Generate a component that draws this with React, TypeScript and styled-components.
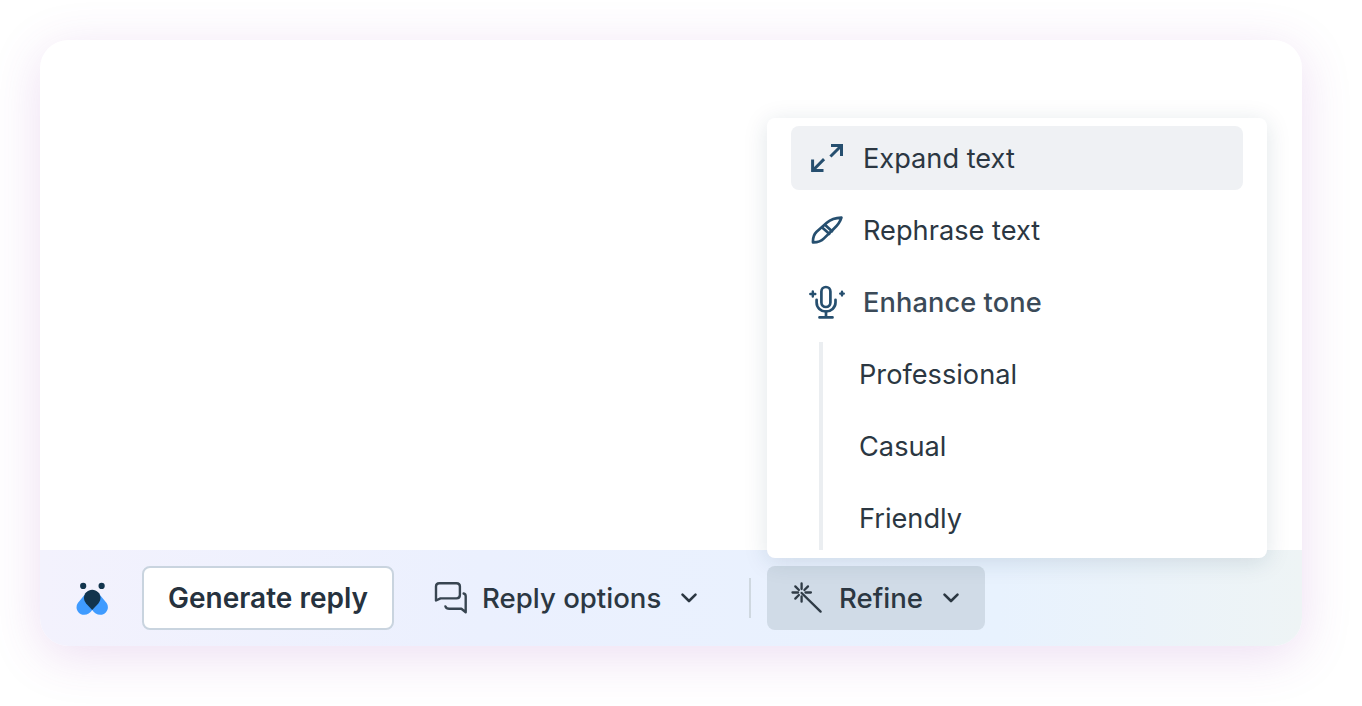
import React from "react";
import styled, { createGlobalStyle } from "styled-components";

const GlobalStyle = createGlobalStyle`
  html, body {
    margin: 0;
    background: #fff;
    overflow: hidden;
  }
  * {
    box-sizing: border-box;
  }
  svg {
    flex-shrink: 0;
  }
`;

const LogoIcon = () => (
  <svg width="33" height="35" viewBox="0 0 34 36" fill="none">
    <circle cx="7.4" cy="4" r="3.2" fill="#12344d" />
    <circle cx="26.4" cy="4" r="3.2" fill="#12344d" />
    <path
      d="M11 10.5 1.9 21.6C-1.6 26.5 2 33.7 8.4 33.7c3.4 0 6.3-1.8 8.3-5 2 3.2 4.9 5 8.3 5 6.4 0 10-7.2 6.5-12.1L22.4 10.5Z"
      fill="#3f9bff"
    />
    <path
      d="M16.7 28.7 10.4 22c-1.4-1.6-2.2-3.6-2.2-5.7 0-4.5 3.8-8.3 8.5-8.3s8.5 3.8 8.5 8.3c0 2.1-.8 4.1-2.2 5.7Z"
      fill="#12344d"
    />
  </svg>
);

const ReplyIcon = () => (
  <svg width="34" height="34" viewBox="0 0 34 34" fill="none" stroke="#384551" strokeWidth="2.4" strokeLinecap="round" strokeLinejoin="round">
    <path d="M2 19.5V5.5C2 3.6 3.4 2.2 5.3 2.2h17.2c2 0 3.4 1.4 3.4 3.3v8.6c0 1.9-1.4 3.3-3.4 3.3H6.5L2 19.5Z" />
    <path d="M29.6 12.5c1.3.3 2.1 1.3 2.1 2.7v16l-4.3-3.4H15.3c-1.9 0-3.3-.8-3.9-2.4" />
  </svg>
);

const Chevron = () => (
  <svg width="18" height="12" viewBox="0 0 18 12" fill="none" stroke="#2b3742" strokeWidth="2.6" strokeLinecap="round" strokeLinejoin="round">
    <path d="M2.5 2.6 9 9l6.5-6.4" />
  </svg>
);

const WandIcon = () => (
  <svg width="32" height="32" viewBox="0 0 32 32" fill="none" stroke="#2f3b46" strokeWidth="2.3" strokeLinecap="round">
    <path d="M10.6 11 29.6 29.6" strokeWidth="2.4" />
    <path d="M10.6 1.5v5.6M1.5 10.5h5.6M14.5 10.5h5.4M4.3 4.4l3.6 3.6M17 4.4l-3.6 3.6M4.3 16.6l3.6-3.6M10.6 14.5v5.2" />
  </svg>
);

const ExpandIcon = () => (
  <svg width="34" height="30" viewBox="0 0 34 30" fill="none" stroke="#264f6f" strokeWidth="3" strokeLinecap="square">
    <path d="M21.5 12.5 31 3M22.5 2.6h9v9" />
    <path d="M13 17.2 3 27.2M2.6 18v9.4H12" />
  </svg>
);

const BrushIcon = () => (
  <svg width="32" height="28" viewBox="0 0 32 28" fill="none" stroke="#264f6f" strokeWidth="2.7" strokeLinecap="round" strokeLinejoin="round">
    <path d="M30.4 1.6c-5.6.2-10.5 1.6-14.6 5.2L5.6 15.8C2.9 18.4 1.8 22.6 2 26.4c4 .1 8.3-1.2 11-4L22.6 13c3.8-3.5 6.5-6.8 7.8-11.4Z" />
    <path d="M11.2 11.6 18.2 17.8M14.2 9 21 15.2" />
  </svg>
);

const MicIcon = () => (
  <svg width="36" height="34" viewBox="0 0 36 34" fill="none" stroke="#264f6f" strokeWidth="2.7" strokeLinecap="round">
    <rect x="12.4" y="2" width="9" height="20" rx="4.5" />
    <path d="M7.6 14.8v2.7c0 5.2 4.2 9 9.3 9s9.6-3.8 9.6-9v-2.7" />
    <path d="M17 26.5v5.4M10.5 32.4h13" />
    <path d="M3.8 6.5v5M1.3 9h5M33 6.8v3.6M31.2 8.6h3.6" strokeWidth="2.4" />
  </svg>
);

const items = [
  { label: "Expand text", icon: <ExpandIcon />, active: true },
  { label: "Rephrase text", icon: <BrushIcon /> },
  { label: "Enhance tone", icon: <MicIcon />, soft: true },
];

const tones = ["Professional", "Casual", "Friendly"];

function App() {
  return (
    <Page>
      <GlobalStyle />
      <Card>
        <Editor />
        <Toolbar>
          <LogoSlot>
            <LogoIcon />
          </LogoSlot>
          <GenerateButton>Generate reply</GenerateButton>
          <ToolButton $width={340}>
            <ReplyIcon />
            <ToolLabel $gap={14}>Reply options</ToolLabel>
            <ChevronSlot>
              <Chevron />
            </ChevronSlot>
          </ToolButton>
          <Divider />
          <ToolButton $width={218} $active>
            <WandIcon />
            <ToolLabel $gap={16}>Refine</ToolLabel>
            <ChevronSlot>
              <Chevron />
            </ChevronSlot>
          </ToolButton>
        </Toolbar>
        <Menu>
          {items.map((item) => (
            <MenuItem key={item.label} $active={item.active}>
              <MenuIcon>{item.icon}</MenuIcon>
              <MenuLabel $soft={item.soft}>{item.label}</MenuLabel>
            </MenuItem>
          ))}
          <SubMenu>
            {tones.map((tone) => (
              <SubItem key={tone}>{tone}</SubItem>
            ))}
          </SubMenu>
        </Menu>
      </Card>
    </Page>
  );
}

const Page = styled.div`
  width: 1362px;
  height: 706px;
  padding: 40px 60px 60px 40px;
  font-family: Inter, "Liberation Sans", sans-serif;
`;

const Card = styled.div`
  position: relative;
  width: 1262px;
  height: 606px;
  display: flex;
  flex-direction: column;
  border-radius: 28px;
  background: #fff;
  box-shadow: 0 10px 50px rgba(150, 60, 180, 0.17);
`;

const Editor = styled.div`
  flex: 1;
  border-radius: 28px 28px 0 0;
`;

const Toolbar = styled.div`
  height: 96px;
  display: flex;
  align-items: center;
  padding-left: 36px;
  border-radius: 0 0 28px 28px;
  background: linear-gradient(90deg, #f3f2fd 0%, #ebf0fe 35%, #e8f2fe 76%, #eef4f5 100%);
`;

const LogoSlot = styled.div`
  width: 66px;
  display: flex;
  padding-top: 2px;
`;

const GenerateButton = styled.button`
  width: 252px;
  height: 64px;
  padding: 0;
  border: 2px solid #c9d4df;
  border-radius: 8px;
  background: #fff;
  color: #26323e;
  font-family: inherit;
  font-size: 28px;
  font-weight: 600;
`;

const ToolButton = styled.div<{ $width: number; $active?: boolean }>`
  width: ${(p) => p.$width}px;
  height: 64px;
  display: flex;
  align-items: center;
  padding-left: ${(p) => (p.$active ? 24 : 40)}px;
  border-radius: 8px;
  background: ${(p) => (p.$active ? "#d0dbe7" : "transparent")};
`;

const ToolLabel = styled.span<{ $gap: number }>`
  margin-left: ${(p) => p.$gap}px;
  color: #2b3742;
  font-size: 27.6px;
  font-weight: 500;
  white-space: nowrap;
`;

const ChevronSlot = styled.span`
  display: flex;
  margin-left: 19px;
`;

const Divider = styled.div`
  width: 2px;
  height: 40px;
  margin: 0 16px 0 15px;
  background: #cfd8e0;
`;

const Menu = styled.div`
  position: absolute;
  top: 78px;
  left: 727px;
  width: 500px;
  height: 440px;
  display: flex;
  flex-direction: column;
  gap: 8px;
  padding: 8px 24px;
  border-radius: 8px;
  background: #fff;
  box-shadow: 0 4px 24px rgba(18, 52, 77, 0.13);
`;

const MenuItem = styled.div<{ $active?: boolean }>`
  height: 64px;
  display: flex;
  align-items: center;
  border-radius: 8px;
  background: ${(p) => (p.$active ? "#eff1f4" : "transparent")};
`;

const MenuIcon = styled.span`
  width: 72px;
  display: flex;
  justify-content: center;
`;

const MenuLabel = styled.span<{ $soft?: boolean }>`
  color: ${(p) => (p.$soft ? "#3b4a58" : "#2b3742")};
  font-size: 27.2px;
  font-weight: ${(p) => (p.$soft ? 500 : 400)};
  letter-spacing: ${(p) => (p.$soft ? "0.1px" : "0")};
  white-space: nowrap;
`;

const SubMenu = styled.div`
  display: flex;
  flex-direction: column;
  gap: 8px;
  margin-left: 28px;
  border-left: 4px solid #ebeef1;
`;

const SubItem = styled.div`
  height: 64px;
  display: flex;
  align-items: center;
  padding-left: 36px;
  color: #2b3742;
  font-size: 27.2px;
  font-weight: 400;
`;

export default App;
